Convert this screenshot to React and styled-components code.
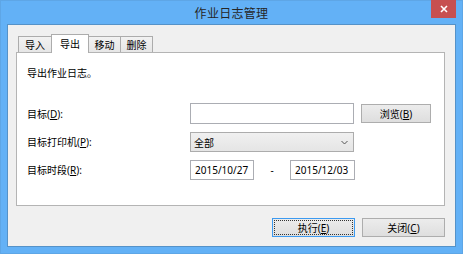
import React from 'react';
import styled, { createGlobalStyle } from 'styled-components';

const GlobalStyle = createGlobalStyle`
  html, body {
    margin: 0;
    padding: 0;
    background: #ffffff;
  }
  * {
    box-sizing: border-box;
  }
`;

const font = `"Noto Sans", "Noto Sans CJK SC", sans-serif`;

const Frame = styled.div`
  width: 463px;
  height: 254px;
  display: flex;
  flex-direction: column;
  padding: 0 6px 6px;
  background: #63b1f6;
  border: 1px solid #5ea6e6;
  font-family: ${font};
  font-size: 10px;
  color: #000;
`;

const TitleBar = styled.div`
  height: 23px;
  display: grid;
  grid-template-columns: 1fr auto 1fr;
  align-items: start;
`;

const Title = styled.div`
  grid-column: 2;
  line-height: 24px;
  padding-top: 1px;
  font-size: 12px;
  letter-spacing: 0.3px;
  color: #262626;
`;

const CloseButton = styled.button`
  grid-column: 3;
  justify-self: end;
  width: 25px;
  height: 18px;
  margin: -1px 0 0 0;
  padding: 0;
  border: none;
  background: #c75050;
  display: flex;
  align-items: center;
  justify-content: center;
`;

const Client = styled.div`
  flex: 1;
  display: flex;
  flex-direction: column;
  padding: 9px 10px 9px 8px;
  background: #f0f0f0;
  border: 1px solid #5592c8;
`;

const TabStrip = styled.div`
  display: flex;
  align-items: flex-end;
  height: 18px;
  padding-left: 2px;
`;

const Tab = styled.div`
  position: relative;
  width: ${p => p.$w}px;
  height: ${p => (p.$active ? 19 : 16)}px;
  margin-right: -1px;
  margin-bottom: ${p => (p.$active ? -1 : 0)}px;
  z-index: ${p => (p.$active ? 1 : 0)};
  display: flex;
  align-items: center;
  justify-content: center;
  padding-bottom: ${p => (p.$active ? 1 : 0)}px;
  border: 1px solid #acacac;
  border-bottom: none;
  background: ${p => (p.$active ? '#ffffff' : 'linear-gradient(#f2f2f2, #e6e6e6)')};
`;

const Panel = styled.div`
  height: 154px;
  padding: 13px 10px 0;
  background: #ffffff;
  border: 1px solid #b4b4b4;
`;

const Intro = styled.div`
  line-height: 14px;
`;

const Form = styled.div`
  margin-top: 23px;
  display: grid;
  grid-template-columns: 163px auto;
  row-gap: 8px;
  align-items: center;
`;

const Label = styled.div`
  line-height: 14px;
`;

const Accel = styled.span`
  text-decoration: underline;
`;

const FieldRow = styled.div`
  display: flex;
  align-items: center;
  gap: ${p => p.$gap || 0}px;
`;

const TextBox = styled.input`
  width: ${p => p.$w}px;
  height: ${p => p.$h || 20}px;
  padding: 0 4px;
  margin: 0;
  border: 1px solid #abadb3;
  background: #ffffff;
  font-family: ${font};
  font-size: 10px;
  color: #000;
  outline: none;
`;

const Dash = styled.span`
  width: 36px;
  text-align: center;
`;

const Select = styled.div`
  width: 164px;
  height: 20px;
  display: flex;
  align-items: center;
  justify-content: space-between;
  padding: 0 5px 0 3px;
  border: 1px solid #acacac;
  background: linear-gradient(#f0f0f0, #e5e5e5);
`;

const Button = styled.button`
  width: ${p => p.$w}px;
  height: 19px;
  margin: 0;
  padding: 0;
  border: 1px solid ${p => (p.$default ? '#3c9af0' : '#adadad')};
  background: linear-gradient(#ececec, #dedede);
  font-family: ${font};
  font-size: 10px;
  color: #000;
  outline: ${p => (p.$default ? '1px dotted #333' : 'none')};
  outline-offset: -3px;
`;

const Footer = styled.div`
  margin-top: 12px;
  display: flex;
  justify-content: flex-end;
  gap: 7px;
`;

const tabs = [
  { label: '导入', w: 34 },
  { label: '导出', w: 38, active: true },
  { label: '移动', w: 33 },
  { label: '删除', w: 33 },
];

export default function App() {
  return (
    <>
      <GlobalStyle />
      <Frame>
        <TitleBar>
          <Title>作业日志管理</Title>
          <CloseButton aria-label="关闭">
            <svg width="8" height="8" viewBox="0 0 8 8">
              <path d="M1 1 L7 7 M7 1 L1 7" stroke="#fff" strokeWidth="1.6" />
            </svg>
          </CloseButton>
        </TitleBar>
        <Client>
          <TabStrip>
            {tabs.map(t => (
              <Tab key={t.label} $w={t.w} $active={t.active}>{t.label}</Tab>
            ))}
          </TabStrip>
          <Panel>
            <Intro>导出作业日志。</Intro>
            <Form>
              <Label>目标(<Accel>D</Accel>):</Label>
              <FieldRow $gap={7}>
                <TextBox $w={164} $h={21} defaultValue="" />
                <Button $w={70}>浏览(<Accel>B</Accel>)</Button>
              </FieldRow>

              <Label>目标打印机(<Accel>P</Accel>):</Label>
              <FieldRow>
                <Select>
                  <span>全部</span>
                  <svg width="7" height="5" viewBox="0 0 7 5">
                    <path d="M0.5 1 L3.5 4 L6.5 1" fill="none" stroke="#555" strokeWidth="1" />
                  </svg>
                </Select>
              </FieldRow>

              <Label>目标时段(<Accel>R</Accel>):</Label>
              <FieldRow>
                <TextBox $w={64} defaultValue="2015/10/27" />
                <Dash>-</Dash>
                <TextBox $w={65} defaultValue="2015/12/03" />
              </FieldRow>
            </Form>
          </Panel>
          <Footer>
            <Button $w={83} $default>执行(<Accel>E</Accel>)</Button>
            <Button $w={83}>关闭(<Accel>C</Accel>)</Button>
          </Footer>
        </Client>
      </Frame>
    </>
  );
}
